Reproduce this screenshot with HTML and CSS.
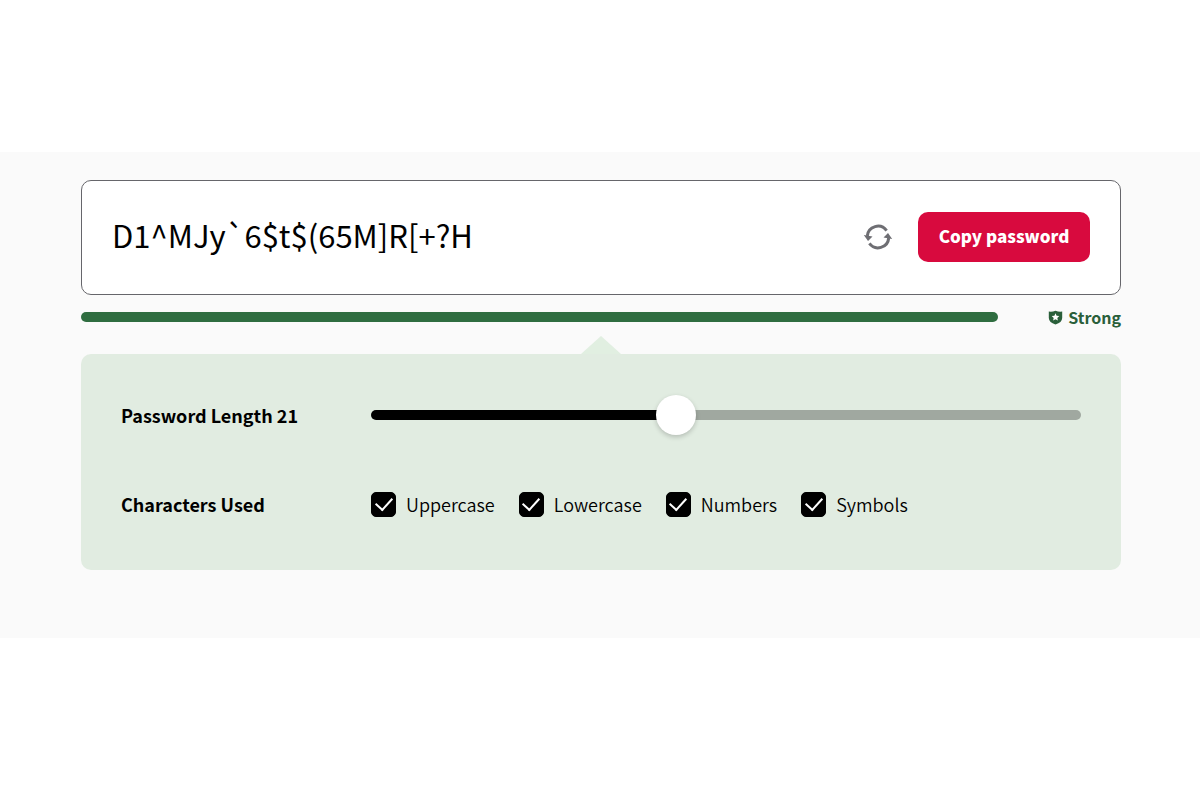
FILE: index.html
```html
<!DOCTYPE html>
<html lang="en">

<head>
    <meta charset="UTF-8">
    <meta name="viewport" content="width=device-width, initial-scale=1">
    <title>Password Generator</title>
    <link rel="stylesheet" href="styles.css">
    <script>
        function updateLength(slider) {
            const percentage = (slider.value - slider.min) / (slider.max - slider.min) * 100;
            slider.style.setProperty('--fill', `${percentage}%`);
            document.getElementById('length_value').textContent = slider.value;
        }

        function copyPassword() {
            navigator.clipboard.writeText(document.getElementById('password').value);
        }
    </script>
</head>

<body>
    <main class="generator">
        <div class="password-box">
            <input class="password" id="password" type="text" aria-label="Generated password" value="D1^MJy`6$t$(65M]R[+?H" readonly>
            <button class="refresh" type="button" aria-label="Generate a new password">
                <svg width="30" height="26" viewBox="0 0 30 26" fill="none">
                    <path d="M4.300 12A10.700 10.700 0 0 1 23.600 6.600M25.700 14A10.700 10.700 0 0 1 6.400 19.400" stroke="#6e6e73" stroke-width="3" />
                    <path d="M.8 11 9.500 12.500 5 17zM29.200 15 20.500 13.500 25 9z" fill="#6e6e73" />
                </svg>
            </button>
            <button class="copy" type="button" onclick="copyPassword()">Copy password</button>
        </div>

        <div class="strength">
            <div class="strength-bar"></div>
            <div class="strength-label">
                <svg width="15" height="15" viewBox="0 0 15 15">
                    <path d="M.8 1.500Q4 2 7.500.8 11 2 14.200 1.500V8Q14 12.500 7.500 14.500 1 12.500.8 8Z" fill="#2a5f3a" />
                    <path d="m7.500 3.300 1.100 2.500 2.700.3-2 1.800.6 2.700-2.400-1.400-2.400 1.400.6-2.700-2-1.800 2.700-.3z" fill="#fff" />
                </svg>
                <span>Strong</span>
            </div>
        </div>

        <div class="options">
            <label class="option-name" for="length">Password Length <span id="length_value">21</span></label>
            <input class="slider" id="length" type="range" min="4" max="44" value="21" oninput="updateLength(this)">

            <span class="option-name" id="characters">Characters Used</span>
            <div class="checks" role="group" aria-labelledby="characters">
                <label class="check"><input type="checkbox" checked>Uppercase</label>
                <label class="check"><input type="checkbox" checked>Lowercase</label>
                <label class="check"><input type="checkbox" checked>Numbers</label>
                <label class="check"><input type="checkbox" checked>Symbols</label>
            </div>
        </div>
    </main>
</body>

</html>
```

FILE: styles.css
```css
* {
    box-sizing: border-box;
}

body {
    margin: 0;
    padding: 152px 0;
    background: #fff;
    color: #000;
    font-family: "Noto Sans CJK SC", sans-serif;
    font-size: 18px;
    line-height: 26px;
}

button,
input {
    margin: 0;
    font-family: inherit;
}

.generator {
    padding: 28px 79px 68px 81px;
    background: #fafafa;
}

.password-box {
    display: flex;
    align-items: center;
    padding: 31px 30px 32px;
    background: #fff;
    border: 1px solid #66666b;
    border-radius: 10px;
}

.password {
    flex: 1;
    min-width: 0;
    height: 50px;
    padding: 0 0 6px;
    border: 0;
    outline: 0;
    background: none;
    color: #000;
    font-size: 31px;
}

.refresh {
    display: flex;
    margin-right: 25px;
    padding: 0;
    border: 0;
    background: none;
    cursor: pointer;
}

.copy {
    width: 172px;
    height: 50px;
    padding: 0 0 4px;
    border: 0;
    border-radius: 10px;
    background: #d80a3e;
    color: #fff;
    font-size: 17px;
    font-weight: 900;
    cursor: pointer;
}

.strength {
    display: flex;
    align-items: center;
    gap: 50px;
    margin-top: 9px;
}

.strength-bar {
    flex: 1;
    height: 10px;
    border-radius: 5px;
    background: #2f6d40;
}

.strength-label {
    display: flex;
    align-items: center;
    gap: 5px;
    color: #2a5f3a;
    font-size: 16px;
    font-weight: 700;
}

.options {
    position: relative;
    display: grid;
    grid-template-columns: 250px 1fr;
    align-items: center;
    row-gap: 56px;
    margin-top: 24px;
    padding: 41px 40px 53px;
    border-radius: 10px;
    background: #e1ece1;
}

/* pointer up to the strength bar */
.options::before {
    content: "";
    position: absolute;
    top: -18px;
    left: 50%;
    margin-left: -20px;
    border: 20px solid transparent;
    border-top: 0;
    border-bottom: 18px solid #e1efe1;
}

.option-name {
    font-weight: 700;
}

.slider {
    --fill: 43%;
    width: 100%;
    height: 40px;
    appearance: none;
    background: none;
    cursor: pointer;
}

.slider::-webkit-slider-runnable-track {
    height: 10px;
    border-radius: 5px;
    background: linear-gradient(to right, #000 var(--fill), #a0a8a0 var(--fill));
}

.slider::-webkit-slider-thumb {
    appearance: none;
    width: 40px;
    height: 40px;
    margin-top: -15px;
    border-radius: 50%;
    background: #fff;
    box-shadow: 0 2px 5px rgba(0, 0, 0, 0.2);
}

.checks {
    display: flex;
    flex-wrap: wrap;
    gap: 24px;
    font-weight: 350;
}

.check {
    display: flex;
    align-items: center;
    gap: 10px;
}

.check input {
    width: 25px;
    height: 25px;
    appearance: none;
    border: 1px solid #000;
    border-radius: 5px;
    background: #fff;
}

.check input:checked {
    background: #000;
}

.check input:checked::before {
    content: "";
    display: block;
    width: 8px;
    height: 14px;
    margin: 1px auto 0;
    border: solid #fff;
    border-width: 0 2px 2px 0;
    transform: rotate(42deg);
}
```
